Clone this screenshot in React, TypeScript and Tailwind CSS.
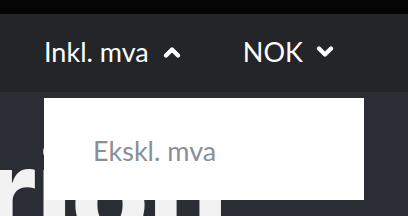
import React from "react";

function ChevronUp() {
  return (
    <svg width="18" height="12" viewBox="0 0 18 12" className="block">
      <polyline points="3,9.5 9,3.5 15,9.5" fill="none" stroke="white" strokeWidth="4.2" strokeLinecap="round" strokeLinejoin="round" />
    </svg>
  );
}
function ChevronDown() {
  return (
    <svg width="18" height="12" viewBox="0 0 18 12" className="block">
      <polyline points="3,2.5 9,8.5 15,2.5" fill="none" stroke="white" strokeWidth="4.2" strokeLinecap="round" strokeLinejoin="round" />
    </svg>
  );
}

export default function App() {
  return (
    <div className="w-[408px] h-[216px] overflow-hidden bg-[#2a2d34] relative" style={{ fontFamily: "Lato, 'Noto Sans', sans-serif" }}>
      <div className="h-[14px] bg-[#050505]" />
      <div className="h-[78px] bg-[#232529] flex items-center pl-[44px] pb-[2px] gap-[62px] text-white text-[27px]">
        <div className="flex items-center gap-[14px]">
          <span>Inkl. mva</span>
          <ChevronUp />
        </div>
        <div className="flex items-center gap-[13px]">
          <span>NOK</span>
          <ChevronDown />
        </div>
      </div>
      <div className="ml-[-16px] mt-[38px] text-[126px] font-extrabold leading-none text-[#f2f2f2] whitespace-nowrap tracking-[-1px] font-['Inter',sans-serif]">rion</div>
      <div className="absolute left-[44px] top-[98px] w-[320px] h-[102px] bg-white flex items-center pl-[49px] pt-[4px]">
        <span className="text-[#8a8f95] text-[27px]">Ekskl. mva</span>
      </div>
    </div>
  );
}
